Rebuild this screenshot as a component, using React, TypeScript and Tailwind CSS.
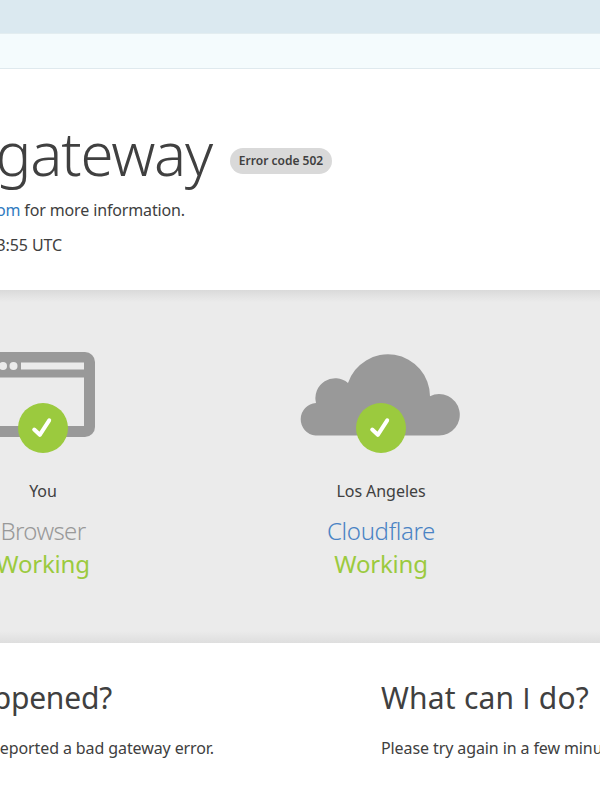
type StatusProps = {
  place: string;
  name: string;
  nameClass: string;
  icon: React.ReactNode;
};

function CheckBadge() {
  return (
    <svg className="absolute top-[51px] left-1/2 size-[50px] -translate-x-1/2" viewBox="0 0 50 50">
      <circle cx="25" cy="25" r="25" fill="#9bca3e" />
      <path d="M16.2 26.5L21.8 31.8L31.2 17.3" fill="none" stroke="#fff" strokeWidth="4" strokeLinecap="round" strokeLinejoin="round" />
    </svg>
  );
}

function BrowserIcon() {
  return (
    <svg className="w-[106px] h-[85px] -translate-x-px" viewBox="0 0 106 85" fill="none">
      <rect width="106" height="85" rx="10" fill="#999" />
      <circle cx="4" cy="14" r="4" fill="#ebebeb" />
      <circle cx="14" cy="14" r="4" fill="#ebebeb" />
      <circle cx="24.5" cy="14" r="4" fill="#ebebeb" />
      <path d="M32 10.5H95V17.5H32ZM10 25.5H95V74H10Z" fill="#ebebeb" />
    </svg>
  );
}

function CloudIcon() {
  return (
    <svg className="mt-[2px] w-[160px] h-[83px] -translate-x-px" viewBox="0 0 160 83">
      <path
        d="M15.5 81.5A16.3 16.3 0 0 1 16 49A19.8 19.8 0 0 1 48 29A42.1 42.1 0 0 1 130 42.2A20.7 20.7 0 1 1 139 81.5Z"
        fill="#999"
      />
    </svg>
  );
}

function Status({ place, name, nameClass, icon }: StatusProps) {
  return (
    <div className="flex w-[338px] shrink-0 flex-col items-center whitespace-nowrap">
      <div className="relative flex h-[101px] justify-center">
        {icon}
        <CheckBadge />
      </div>
      <p className="mt-[26px] text-[16px] leading-6 tracking-[-0.05px]">{place}</p>
      <h3 className={`mt-[11px] text-[24px] leading-[33px] font-light ${nameClass}`}>{name}</h3>
      <span className="text-[24px] leading-[33px] tracking-[-0.2px] text-[#9bca3e]">Working</span>
    </div>
  );
}

export default function App() {
  return (
    <main className="h-[800px] w-[600px] overflow-hidden bg-white font-['Noto_Sans','Open_Sans',sans-serif] text-[#404040]">
      <div className="h-[33px] bg-[#dbe9f0]" />
      <div className="h-[36px] border-t border-b border-t-[#e3edf0] border-b-[#dfe9ee] bg-[#f4fbfd]" />

      <header className="h-[221px] pt-[44px] whitespace-nowrap">
        <div className="flex h-[80px] items-center">
          <h1 className="flex w-[212px] shrink-0 justify-end text-[60px] leading-[80px] font-light tracking-[-1.2px]">gateway</h1>
          <span className="mt-[15px] ml-[18px] flex h-[26px] w-[102px] items-center justify-center rounded-full bg-[#d9d9d9] text-[12px] font-semibold">
            Error code 502
          </span>
        </div>
        <p className="mt-[5px] flex w-[185px] justify-end text-[16px] leading-6 tracking-[-0.14px]">
          <span className="whitespace-pre"><span className="text-[#2f7bbf]">om</span> for more information.</span>
        </p>
        <p className="mt-[11px] flex w-[62px] justify-end text-[16px] leading-6 tracking-[-0.1px]">3:55 UTC</p>
      </header>

      <section className="flex h-[353px] bg-[#ebebeb] bg-[linear-gradient(#dadada,#ebebeb_12px,#ebebeb_341px,#dedede)] pt-[62px]">
        <div className="-ml-[126px] flex">
          <Status place="You" name="Browser" nameClass="text-[#999] tracking-[-0.6px]" icon={<BrowserIcon />} />
          <Status place="Los Angeles" name="Cloudflare" nameClass="text-[#4a83c4] tracking-[-0.35px]" icon={<CloudIcon />} />
        </div>
      </section>

      <section className="flex pt-[31px] whitespace-nowrap">
        <div className="w-[381px] shrink-0">
          <h2 className="flex w-[112px] justify-end text-[30px] leading-[48px] tracking-[-0.2px]">ppened?</h2>
          <p className="mt-[14px] flex w-[214px] justify-end text-[16px] leading-6 tracking-[-0.1px]">eported a bad gateway error.</p>
        </div>
        <div>
          <h2 className="text-[30px] leading-[48px] tracking-[0.2px]">
            What can <span className="font-['Open_Sans',sans-serif]">I</span> do?
          </h2>
          <p className="mt-[14px] text-[16px] leading-6 tracking-[-0.1px]">Please try again in a few minutes.</p>
        </div>
      </section>
    </main>
  );
}
